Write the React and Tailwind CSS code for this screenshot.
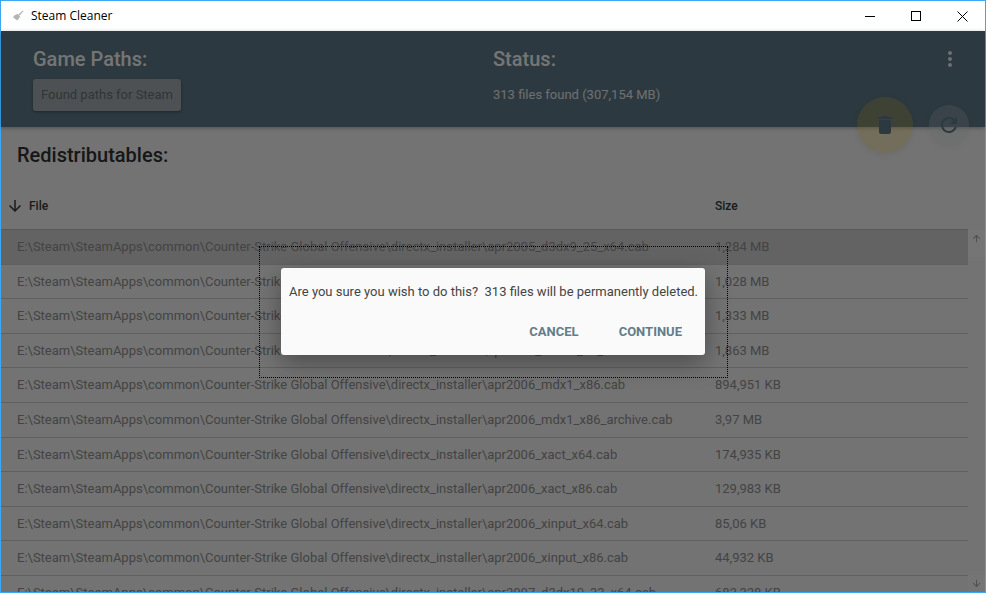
const DIR = 'E:\\Steam\\SteamApps\\common\\Counter-Strike Global Offensive\\directx_installer\\';

const ROWS = [
  ['apr2005_d3dx9_25_x64.cab', '1,284 MB'],
  ['apr2005_d3dx9_25_x86.cab', '1,028 MB'],
  ['apr2006_d3dx9_30_x64.cab', '1,333 MB'],
  ['apr2006_d3dx9_30_x86.cab', '1,863 MB'],
  ['apr2006_mdx1_x86.cab', '894,951 KB'],
  ['apr2006_mdx1_x86_archive.cab', '3,97 MB'],
  ['apr2006_xact_x64.cab', '174,935 KB'],
  ['apr2006_xact_x86.cab', '129,983 KB'],
  ['apr2006_xinput_x64.cab', '85,06 KB'],
  ['apr2006_xinput_x86.cab', '44,932 KB'],
  ['apr2007_d3dx10_33_x64.cab', '682,328 KB'],
];

function MaterialIcon({ d, className }) {
  return (
    <svg className={className} viewBox="0 0 24 24" fill="currentColor">
      <path d={d} />
    </svg>
  );
}

const ARROW_DOWN = 'M20 12l-1.41-1.41L13 16.17V4h-2v12.17l-5.58-5.59L4 12l8 8 8-8z';
const ARROW_UP = 'M4 12l1.41 1.41L11 7.83V20h2V7.83l5.58 5.59L20 12l-8-8-8 8z';
const MORE_VERT =
  'M12 8c1.1 0 2-.9 2-2s-.9-2-2-2-2 .9-2 2 .9 2 2 2zm0 2c-1.1 0-2 .9-2 2s.9 2 2 2 2-.9 2-2-.9-2-2-2zm0 6c-1.1 0-2 .9-2 2s.9 2 2 2 2-.9 2-2-.9-2-2-2z';
const DELETE = 'M6 19c0 1.1.9 2 2 2h8c1.1 0 2-.9 2-2V7H6v12zM19 4h-3.5l-1-1h-5l-1 1H5v2h14V4z';
const REFRESH =
  'M17.65 6.35C16.2 4.9 14.21 4 12 4c-4.42 0-7.99 3.58-7.99 8s3.57 8 7.99 8c3.73 0 6.84-2.55 7.73-6h-2.08c-.82 2.33-3.04 4-5.65 4-3.31 0-6-2.69-6-6s2.69-6 6-6c1.66 0 3.14.69 4.22 1.78L13 11h7V4l-2.35 2.35z';

function TitleBar() {
  return (
    <div className="flex h-[30px] shrink-0 items-center bg-white font-['Open_Sans',sans-serif] text-[12px] text-black">
      <svg className="ml-[11px] h-[12px] w-[12px]" viewBox="0 0 12 12" fill="#b4b4b4">
        <path d="M11 0.5 6.5 4.2l1.2 1.2L11.6 1z" />
        <path d="M5.6 3.8 8.2 6.4 5.4 10.4 1 7.6 2.2 6.8 1 6.2z" />
      </svg>
      <span className="ml-[7px]">Steam Cleaner</span>
      <div className="ml-auto flex h-full">
        <div className="flex w-[46px] items-center justify-center">
          <div className="h-px w-[10px] bg-black" />
        </div>
        <div className="flex w-[46px] items-center justify-center">
          <div className="h-[10px] w-[10px] border border-black" />
        </div>
        <div className="flex w-[46px] items-center justify-center">
          <svg className="h-[11px] w-[11px]" viewBox="0 0 11 11" stroke="black" strokeWidth="1" fill="none">
            <path d="M0.5 0.5 10.5 10.5M10.5 0.5 0.5 10.5" />
          </svg>
        </div>
      </div>
    </div>
  );
}

function Header() {
  return (
    <div className="relative z-10 flex h-[96px] shrink-0 bg-[#607d8b] pl-[32px] pt-[15px] text-white shadow-[0_1px_4px_rgba(0,0,0,0.3)]">
      <div className="w-[460px]">
        <h2 className="text-[20px] font-medium leading-[26px]">Game Paths:</h2>
        <button
          type="button"
          className="mt-[7px] h-[32px] w-[148px] rounded-[3px] bg-[#a9b1b6] text-[13px] text-[#6a747a] shadow-[0_1px_3px_rgba(0,0,0,0.35)]"
        >
          Found paths for Steam
        </button>
      </div>
      <div>
        <h2 className="text-[20px] font-medium leading-[26px]">Status:</h2>
        <p className="mt-[15px] text-[13px] leading-[16px] text-white/90">313 files found (307,154 MB)</p>
      </div>
      <MaterialIcon d={MORE_VERT} className="absolute right-[23px] top-[16px] h-[24px] w-[24px] text-white/90" />
    </div>
  );
}

function Fabs() {
  return (
    <>
      <div className="absolute left-[856px] top-[66px] z-20 flex h-[56px] w-[56px] items-center justify-center rounded-full bg-[#ffc928]/25 shadow-[0_2px_6px_rgba(0,0,0,0.07)]">
        <MaterialIcon d={DELETE} className="h-[24px] w-[24px] text-[#607d8b]" />
      </div>
      <div className="absolute left-[928px] top-[74px] z-20 flex h-[40px] w-[40px] items-center justify-center rounded-full bg-[#cfd8dc]/25 shadow-[0_2px_6px_rgba(0,0,0,0.05)]">
        <MaterialIcon d={REFRESH} className="h-[24px] w-[24px] text-[#607d8b]" />
      </div>
    </>
  );
}

function FileTable() {
  return (
    <div className="flex min-h-0 flex-1 flex-col">
      <h2 className="ml-[16px] mt-[15px] text-[20px] font-medium leading-[26px] text-[#333]">Redistributables:</h2>
      <div className="mt-[14px] flex h-[48px] w-[967px] shrink-0 items-center border-b border-[#c0c0c0] text-[12px] font-medium text-[#3c3c3c]">
        <MaterialIcon d={ARROW_DOWN} className="ml-[5px] h-[18px] w-[18px]" />
        <span className="ml-[5px] w-[686px]">File</span>
        <span>Size</span>
      </div>
      <div className="flex min-h-0 flex-1">
        <div className="min-w-0 flex-1 overflow-hidden">
          {ROWS.map(([name, size], i) => (
            <div
              key={name}
              className={`flex h-[34.6px] items-center whitespace-nowrap border-b border-[#d2d2d2] text-[13px] text-[#949494] ${
                i === 0 ? 'bg-[#d8d8d8]' : ''
              }`}
            >
              <span className="ml-[16px] w-[698px]">{DIR + name}</span>
              <span>{size}</span>
            </div>
          ))}
        </div>
        <div className="flex w-[17px] shrink-0 flex-col justify-between text-[#a8a8a8]">
          <div className="flex h-[27px] justify-center bg-white pt-[3px]">
            <MaterialIcon d={ARROW_UP} className="h-[11px] w-[11px]" />
          </div>
          <div className="flex h-[17px] items-center justify-center bg-white">
            <MaterialIcon d={ARROW_DOWN} className="h-[11px] w-[11px]" />
          </div>
        </div>
      </div>
    </div>
  );
}

function Dialog() {
  return (
    <div className="relative h-[87px] w-[424px] rounded-[3px] bg-[#fafafa] shadow-[0_8px_24px_rgba(0,0,0,0.35)]">
      <p className="pl-[8px] pt-[15px] text-[13px] leading-[17px] text-[#444]">
        Are you sure you wish to do this?&nbsp; 313 files will be permanently deleted.
      </p>
      <div className="mt-[24px] flex justify-end gap-[40px] pr-[23px] text-[13px] font-bold leading-[15px] text-[#607d8b]">
        <span>CANCEL</span>
        <span>CONTINUE</span>
      </div>
    </div>
  );
}

export default function App() {
  return (
    <div className="h-[593px] w-[986px] overflow-hidden bg-[#3aa9f5] p-px font-['Roboto',sans-serif]">
      <div className="flex h-full flex-col bg-[#fafafa]">
        <TitleBar />
        <div className="relative flex min-h-0 flex-1 flex-col">
          <Header />
          <FileTable />
          <Fabs />
          <div className="absolute inset-0 z-30 flex items-center justify-center bg-black/54">
            <Dialog />
          </div>
          <div className="absolute left-[258px] top-[215px] z-40 h-[132px] w-[469px] border border-dotted border-black" />
        </div>
      </div>
    </div>
  );
}
